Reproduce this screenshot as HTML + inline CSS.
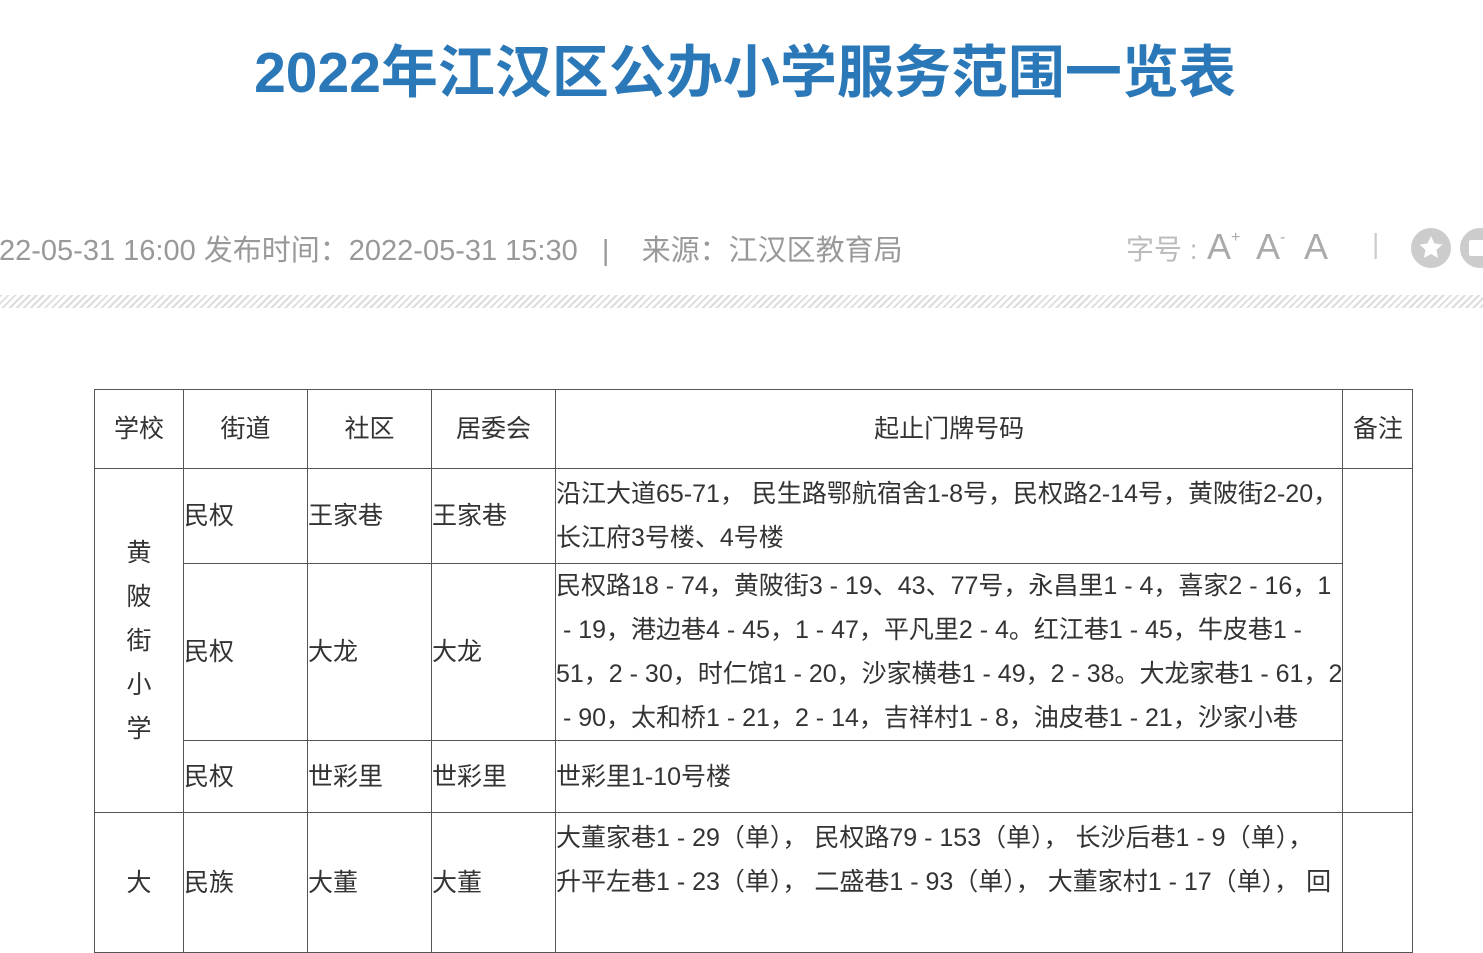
<!DOCTYPE html>
<html><head><meta charset="utf-8"><style>
body{margin:0;width:1483px;height:904px;overflow:hidden;background:#fff;font-family:"Liberation Sans","Noto Sans CJK SC",sans-serif;position:relative}
.title{position:absolute;top:27px;left:0;width:1490px;text-align:center;font-size:57px;font-weight:bold;color:#2a78b8}
.meta{position:absolute;top:227px;left:-1px;font-size:29px;color:#999;white-space:nowrap}
.fz{position:absolute;top:228px;left:1126px;font-size:28px;color:#bbb;white-space:nowrap}
.a{position:absolute;top:226px;font-size:36px;color:#aaa}
.a sup{font-size:16px;position:relative;top:-4px}
.hatch{position:absolute;top:295px;left:0;width:1483px;height:13px;background:repeating-linear-gradient(135deg,#ddd 0 2px,#fff 2px 5px)}
.circ{position:absolute;top:228px;width:40px;height:40px;border-radius:50%;background:#ccc}
table{position:absolute;top:389px;left:94px;border-collapse:collapse;font-size:25px;color:#333}
td{border:1px solid #555;padding:0;vertical-align:middle;line-height:44px;white-space:nowrap}
.h td{text-align:center;height:78px}
.c{text-align:center}
</style></head><body>
<div class="title">2022年江汉区公办小学服务范围一览表</div>
<div class="meta">22-05-31 16:00 发布时间：2022-05-31 15:30 &nbsp;&nbsp;| &nbsp;&nbsp;&nbsp;来源：江汉区教育局</div>
<div class="fz">字号 :</div>
<div class="a" style="left:1207px">A<sup>+</sup></div>
<div class="a" style="left:1256px">A<sup>-</sup></div>
<div class="a" style="left:1304px">A</div>
<div class="fz" style="left:1372px;color:#ccc">|</div>
<div class="circ" style="left:1411px"><svg width="40" height="40"><path d="M20 8l3.5 7.5 8 1-6 5.5 1.6 8L20 26l-7.1 4 1.6-8-6-5.5 8-1z" fill="#fff"/></svg></div>
<div class="circ" style="left:1460px"><div style="position:absolute;left:9px;top:12px;width:22px;height:16px;background:#fff;border-radius:2px"></div></div>
<div class="hatch"></div>
<table>
<colgroup><col style="width:89px"><col style="width:124px"><col style="width:124px"><col style="width:124px"><col style="width:787px"><col style="width:70px"></colgroup>
<tr class="h"><td>学校</td><td>街道</td><td>社区</td><td>居委会</td><td>起止门牌号码</td><td>备注</td></tr>
<tr style="height:95px"><td rowspan="3" class="c">黄<br>陂<br>街<br>小<br>学</td><td>民权</td><td>王家巷</td><td>王家巷</td><td>沿江大道65-71， 民生路鄂航宿舍1-8号，民权路2-14号，黄陂街2-20，<br>长江府3号楼、4号楼</td><td rowspan="3"></td></tr>
<tr style="height:177px"><td>民权</td><td>大龙</td><td>大龙</td><td>民权路18 - 74，黄陂街3 - 19、43、77号，永昌里1 - 4，喜家2 - 16，1<br>&nbsp;- 19，港边巷4 - 45，1 - 47，平凡里2 - 4。红江巷1 - 45，牛皮巷1 -<br>51，2 - 30，时仁馆1 - 20，沙家横巷1 - 49，2 - 38。大龙家巷1 - 61，2<br>&nbsp;- 90，太和桥1 - 21，2 - 14，吉祥村1 - 8，油皮巷1 - 21，沙家小巷</td></tr>
<tr style="height:72px"><td>民权</td><td>世彩里</td><td>世彩里</td><td>世彩里1-10号楼</td></tr>
<tr style="height:140px"><td class="c">大</td><td>民族</td><td>大董</td><td>大董</td><td style="vertical-align:top;padding-top:3px">大董家巷1 - 29（单）， 民权路79 - 153（单）， 长沙后巷1 - 9（单），<br>升平左巷1 - 23（单）， 二盛巷1 - 93（单）， 大董家村1 - 17（单）， 回</td><td></td></tr>
</table>
</body></html>
